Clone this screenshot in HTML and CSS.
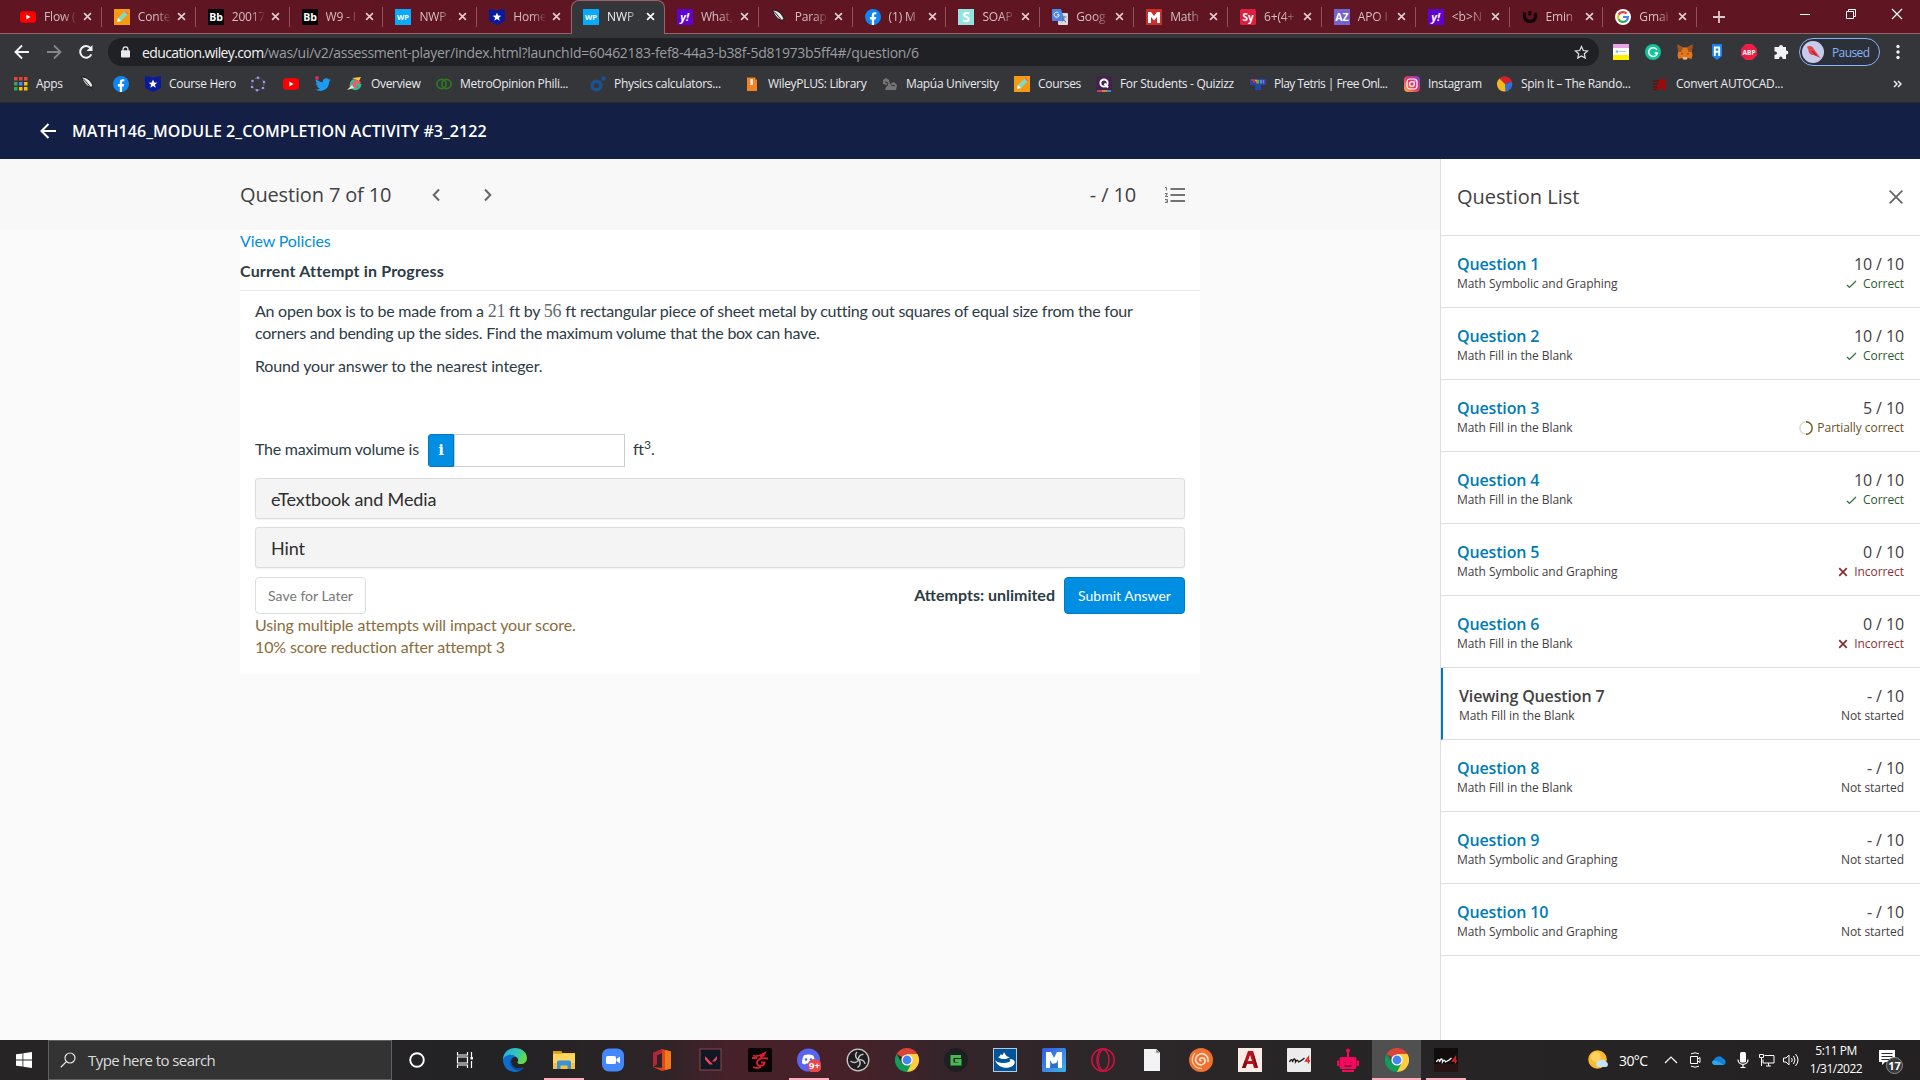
FILE: index.html
```html
<!DOCTYPE html>
<html lang="en">
<head>
<meta charset="utf-8">
<title>NWP Assessment Player</title>
<link rel="stylesheet" href="styles.css">
</head>
<body>
<svg class="defs" width="0" height="0">
  <defs>
    <symbol id="x" viewBox="0 0 10 10"><path d="M1.2 1.2l7.6 7.6M8.8 1.2L1.2 8.8" stroke="currentColor" stroke-width="1.8" fill="none"/></symbol>
    <symbol id="yt" viewBox="0 0 16 16"><rect y="2.3" width="16" height="11.4" rx="3" fill="#f00"/><path d="M6.3 5.5v5l4.3-2.5z" fill="#fff"/></symbol>
    <symbol id="pencil" viewBox="0 0 16 16"><rect width="16" height="16" fill="#f79a10"/><path d="M3 13l1-4 6.500-6.500 3 3L7 12z" fill="#7fd9c4"/><path d="M3 13l1-4 3 3z" fill="#fff"/><path d="M10.500 2.500l1-1 3 3-1 1z" fill="#ef6a7a"/></symbol>
    <symbol id="bb" viewBox="0 0 16 16"><rect width="16" height="16" fill="#050505"/><text x="8" y="12" class="ic-bold" font-size="10.500" fill="#fff">Bb</text></symbol>
    <symbol id="wp" viewBox="0 0 16 16"><rect width="16" height="16" fill="#0aaafa"/><text x="8" y="11" class="ic-bold" font-size="7.500" fill="#fff">WP</text></symbol>
    <symbol id="hero" viewBox="0 0 16 16"><path d="M0 0l8 1.500L16 0v12l-8 4-8-4z" fill="#0a1a9c"/><path d="M8 3.600l1.200 2.900 3.100.2-2.400 2 .8 3L8 10.100l-2.700 1.600.8-3-2.400-2 3.100-.2z" fill="#fff"/></symbol>
    <symbol id="yahoo" viewBox="0 0 16 16"><rect width="16" height="16" fill="#6001d2"/><text x="7.700" y="11.500" class="ic-bold" font-size="11" font-style="italic" fill="#fff">y!</text></symbol>
    <symbol id="feather" viewBox="0 0 16 16"><path d="M1.500 1c5 0 9 3 11.300 8.500L11 11.800C6 10 3 6 1.500 1z" fill="#e8e8e8" stroke="#111" stroke-width="1"/><path d="M3 2.500c3 3 6 7 10.500 12" stroke="#222" fill="none"/></symbol>
    <symbol id="fb" viewBox="0 0 16 16"><circle cx="8" cy="8" r="8" fill="#0f86f2"/><path d="M6.800 16v-5.600H4.900V8h1.900V6.300c0-2 1.100-3.100 2.900-3.100.9 0 1.600.1 1.600.1v1.900h-1c-1 0-1.200.6-1.200 1.200V8h2.100l-.4 2.400H9.100V16z" fill="#fff"/></symbol>
    <symbol id="soap" viewBox="0 0 16 16"><rect width="16" height="16" fill="#93e4e1"/><text x="8" y="13" class="ic-bold" font-size="14" fill="#fff">S</text></symbol>
    <symbol id="gt" viewBox="0 0 16 16"><rect x="6" y="4" width="10" height="12" rx="1" fill="#d8dbe0"/><path d="M0 1q0-1 1-1h8l4 12H1q-1 0-1-1z" fill="#4a86ea"/><path d="M7.200 5.800A2.500 2.500 0 1 1 6.500 4M5 5.800h2.200" stroke="#fff" fill="none"/><path d="M9.500 8h5M12 7v1c0 2-1 4-2.500 5M10.500 9c.5 2 2 3 3.500 4" stroke="#6b7788" fill="none" stroke-width=".9"/></symbol>
    <symbol id="mway" viewBox="0 0 16 16"><rect width="16" height="16" fill="#c9302c"/><path d="M2 14V3h3l3 4 3-4h3v11h-3V8l-3 3.500L5 8v6z" fill="#fff"/></symbol>
    <symbol id="sy" viewBox="0 0 16 16"><rect width="16" height="16" rx="1.500" fill="#dd1f40"/><text x="8" y="11.500" class="ic-bold" font-size="10" fill="#fff">Sy</text></symbol>
    <symbol id="az" viewBox="0 0 16 16"><rect width="16" height="16" fill="#7364d2"/><text x="8" y="12" class="ic-bold" font-size="10.500" fill="#fff">AZ</text></symbol>
    <symbol id="emin" viewBox="0 0 16 16"><path d="M3 3.500c-1.500 5 .5 9 5 9 4.500-.3 7-4 5-8.500" stroke="#120608" stroke-width="3.200" fill="none"/><path d="M7.800 2v4.500" stroke="#120608" stroke-width="3"/></symbol>
    <symbol id="google" viewBox="0 0 16 16"><circle cx="8" cy="8" r="8" fill="#fff"/><g fill="none" stroke-width="2.200"><path d="M11.600 4.600A5 5 0 0 0 3.600 5.800" stroke="#ea4335"/><path d="M3.600 5.700a5 5 0 0 0 0 4.600" stroke="#fbbc05"/><path d="M3.600 10.200a5 5 0 0 0 8 1.300" stroke="#34a853"/><path d="M8 8h4.900a5 5 0 0 1-1.400 3.600" stroke="#4285f4"/></g></symbol>
    <symbol id="chrome" viewBox="0 0 24 24"><path d="M12 12L1.600 6A12 12 0 0 1 22.400 6z" fill="#db4437"/><path d="M12 24A12 12 0 0 0 22.400 6H12v6z" fill="#ffcd40"/><path d="M1.600 6L7 15.200a6 6 0 0 0 9.500 0L12 24A12 12 0 0 1 1.600 6z" fill="#0f9d58"/><circle cx="12" cy="12" r="5.600" fill="#fff"/><circle cx="12" cy="12" r="4.400" fill="#4285f4"/></symbol>
    <symbol id="check" viewBox="0 0 12 10"><path d="M1 5.500l2.700 2.700L11 1" stroke="#3b7040" stroke-width="1.500" fill="none"/></symbol>
  </defs>
</svg>

<div class="screen">
  <div class="tabs">
    <div class="tab"><svg class="fav"><use href="#yt"/></svg><span>Flow (</span><svg class="tx"><use href="#x"/></svg></div>
    <div class="tab"><svg class="fav"><use href="#pencil"/></svg><span>Conte</span><svg class="tx"><use href="#x"/></svg></div>
    <div class="tab"><svg class="fav"><use href="#bb"/></svg><span>20017</span><svg class="tx"><use href="#x"/></svg></div>
    <div class="tab"><svg class="fav"><use href="#bb"/></svg><span>W9 - I</span><svg class="tx"><use href="#x"/></svg></div>
    <div class="tab"><svg class="fav"><use href="#wp"/></svg><span>NWP .</span><svg class="tx"><use href="#x"/></svg></div>
    <div class="tab nosep"><svg class="fav"><use href="#hero"/></svg><span>Home</span><svg class="tx"><use href="#x"/></svg></div>
    <div class="tab active"><svg class="fav"><use href="#wp"/></svg><span>NWP .</span><svg class="tx"><use href="#x"/></svg></div>
    <div class="tab"><svg class="fav"><use href="#yahoo"/></svg><span>What,</span><svg class="tx"><use href="#x"/></svg></div>
    <div class="tab"><svg class="fav"><use href="#feather"/></svg><span>Parap</span><svg class="tx"><use href="#x"/></svg></div>
    <div class="tab"><svg class="fav"><use href="#fb"/></svg><span>(1) M</span><svg class="tx"><use href="#x"/></svg></div>
    <div class="tab"><svg class="fav"><use href="#soap"/></svg><span>SOAP</span><svg class="tx"><use href="#x"/></svg></div>
    <div class="tab"><svg class="fav"><use href="#gt"/></svg><span>Goog</span><svg class="tx"><use href="#x"/></svg></div>
    <div class="tab"><svg class="fav"><use href="#mway"/></svg><span>Math</span><svg class="tx"><use href="#x"/></svg></div>
    <div class="tab"><svg class="fav"><use href="#sy"/></svg><span>6+(4+</span><svg class="tx"><use href="#x"/></svg></div>
    <div class="tab"><svg class="fav"><use href="#az"/></svg><span>APO I</span><svg class="tx"><use href="#x"/></svg></div>
    <div class="tab"><svg class="fav"><use href="#yahoo"/></svg><span class="tight">&lt;b&gt;N</span><svg class="tx"><use href="#x"/></svg></div>
    <div class="tab"><svg class="fav"><use href="#emin"/></svg><span>Emin</span><svg class="tx"><use href="#x"/></svg></div>
    <div class="tab"><svg class="fav"><use href="#google"/></svg><span>Gmai</span><svg class="tx"><use href="#x"/></svg></div>
    <svg class="newtab" viewBox="0 0 12 12"><path d="M6 0v12M0 6h12" stroke="#d8c8ca" stroke-width="1.800"/></svg>
    <div class="winctl">
      <svg viewBox="0 0 12 12"><path d="M1 6.500h10" stroke="#fff"/></svg>
      <svg viewBox="0 0 12 12"><path d="M1.500 3.500h7v7h-7zM3.500 3.500v-2h7v7h-2" stroke="#fff" fill="none"/></svg>
      <svg viewBox="0 0 12 12"><path d="M1 1l10 10M11 1L1 11" stroke="#fff" stroke-width="1.200"/></svg>
    </div>
  </div>

  <div class="toolbar">
    <svg class="nav" viewBox="0 0 16 16"><path d="M15 8H2M8 1.500L1.500 8 8 14.500" stroke="#f1f3f4" stroke-width="1.900" fill="none"/></svg>
    <svg class="nav" viewBox="0 0 16 16"><path d="M1 8h13M8 1.500L14.500 8 8 14.500" stroke="#85868a" stroke-width="1.800" fill="none"/></svg>
    <svg class="nav" viewBox="0 0 16 16"><path d="M13.300 10.300A5.800 5.800 0 1 1 12.500 4.200" stroke="#f1f3f4" stroke-width="2" fill="none"/><path d="M14.500 1v6h-6z" fill="#f1f3f4"/></svg>
    <div class="omni">
      <svg class="lock" viewBox="0 0 10 13"><rect y="4.500" width="10" height="8" rx="1" fill="#e8eaed"/><path d="M2.300 5V3.400a2.700 2.700 0 0 1 5.400 0V5" stroke="#e8eaed" stroke-width="1.400" fill="none"/></svg>
      <span class="host">education.wiley.com</span><span class="path">/was/ui/v2/assessment-player/index.html?launchId=60462183-fef8-44a3-b38f-5d81973b5ff4#/question/6</span>
      <svg class="star" viewBox="0 0 16 16"><path d="M8 1.700l1.900 4.200 4.500.5-3.400 3 1 4.500L8 11.600l-4 2.300 1-4.500-3.400-3 4.500-.5z" stroke="#e0e2e5" stroke-width="1.300" fill="none"/></svg>
    </div>
    <div class="exts">
      <svg viewBox="0 0 16 16"><rect width="16" height="16" fill="#fff"/><rect width="16" height="4" fill="#e9a4e4"/><rect y="11" width="16" height="5" fill="#faf000"/><circle cx="4" cy="7.500" r="1.300" fill="#86aef0"/><path d="M6 7.500h7" stroke="#b8c4d8"/></svg>
      <svg viewBox="0 0 16 16"><circle cx="8" cy="8" r="8" fill="#15c39a"/><path d="M12 6A4.400 4.400 0 1 0 12.400 9H9.500" stroke="#fff" stroke-width="1.500" fill="none"/></svg>
      <svg viewBox="0 0 16 16"><path d="M.5.500l5.500 3h4l5.500-3-.7 7 .7 4-1 3.500-3.500-1-1.500 2h-3l-1.500-2-3.500 1L.5 11.500l.7-4z" fill="#e2761b"/><path d="M.5.500l5.500 3L4.500 8 1 8zM15.500.500L10 3.500 11.500 8 15 8z" fill="#a4501c"/><path d="M6 13h4v2H6z" fill="#c9c0b8"/><path d="M4 9l2 1-1 .5zM12 9l-2 1 1 .5z" fill="#222"/></svg>
      <svg viewBox="0 0 16 16"><path d="M3 0h10v12L8 16l-5-4z" fill="#1683f0"/><path d="M5.800 12V3.500h4.400V12M5.800 7.800h4.400" stroke="#fff" stroke-width="1.900" fill="none"/></svg>
      <svg viewBox="0 0 16 16"><path d="M4.700 0h6.600L16 4.700v6.600L11.300 16H4.700L0 11.300V4.700z" fill="#ed1e45"/><text x="8" y="10.500" class="ic-bold" font-size="6.500" fill="#fff">ABP</text></svg>
      <svg viewBox="0 0 16 16"><path d="M6 3a2 2 0 0 1 4 0h3v3.500h.3a2 2 0 0 1 0 4H13V15H9.500v-.8a1.700 1.700 0 0 0-3.400 0v.8H1.500v-4.200h.8a1.700 1.700 0 0 0 0-3.400h-.8V3z" fill="#f1f3f4"/></svg>
    </div>
    <div class="pill"><svg viewBox="0 0 22 22"><circle cx="11" cy="11" r="11" fill="#c6cbea"/><path d="M5 6c3-2 6-.5 7.500 3l6 8-7-3c-3 0-5-2-5-5z" fill="#e8444a"/><path d="M10 10l4.500 4.500" stroke="#a02630" stroke-width="1.300"/></svg><span>Paused</span></div>
    <svg class="dots" viewBox="0 0 4 16"><circle cx="2" cy="2.500" r="1.700" fill="#f1f3f4"/><circle cx="2" cy="8" r="1.700" fill="#f1f3f4"/><circle cx="2" cy="13.500" r="1.700" fill="#f1f3f4"/></svg>
  </div>

  <div class="marks">
    <div><svg viewBox="0 0 16 16"><path d="M2 1h3.500v3.500H2z M7 1h3.500v3.500H7zM12 1h3.500v3.500H12z" fill="#ea4335"/><path d="M2 6h3.500v3.500H2zM2 11h3.500v3.500H2z" fill="#34a853"/><path d="M7 6h3.500v3.500H7z" fill="#4285f4"/><path d="M12 6h3.500v3.500H12zM7 11h3.500v3.500H7zM12 11h3.500v3.500H12z" fill="#fbbc05"/></svg><span>Apps</span></div>
    <div><svg><use href="#feather"/></svg></div>
    <div><svg><use href="#fb"/></svg></div>
    <div><svg><use href="#hero"/></svg><span>Course Hero</span></div>
    <div><svg viewBox="0 0 16 16"><circle cx="8" cy="8" r="6" fill="none" stroke="#6b6b78" stroke-dasharray="2 1.500"/><g fill="#9799f5"><circle cx="8" cy="1.700" r="1.300"/><circle cx="14" cy="6" r="1.300"/><circle cx="13" cy="12" r="1.300"/><circle cx="7" cy="14.300" r="1.300"/><circle cx="2" cy="11" r="1.300"/><circle cx="2.500" cy="5" r="1.300"/></g></svg></div>
    <div><svg><use href="#yt"/></svg></div>
    <div><svg viewBox="0 0 16 16"><path d="M15.800 3.800c-.6.300-1.200.4-1.800.5.700-.4 1.100-1 1.400-1.700-.6.400-1.300.6-2 .8a3.200 3.200 0 0 0-5.500 2.900C5.200 6.200 2.900 4.900 1.300 3a3.200 3.200 0 0 0 1 4.300c-.5 0-1-.2-1.500-.4 0 1.500 1.100 2.900 2.600 3.200-.5.100-1 .1-1.400 0 .4 1.300 1.600 2.200 3 2.200A6.500 6.500 0 0 1 .3 13.600C6 17 14.200 13.800 14.200 5.500c.6-.5 1.200-1 1.600-1.700z" fill="#1d9bf0"/><circle cx="2" cy="2" r="2" fill="#e0245e"/></svg></div>
    <div><svg viewBox="0 0 16 16"><path d="M5 2l9-1-2 4z" fill="#f7c948"/><path d="M2 10L8 3l6 3-5 7z" fill="#ef5b6c"/><path d="M8 4a4.500 4.500 0 1 0 5 5H9" stroke="#39b98b" stroke-width="2.500" fill="none"/><path d="M0 14l5-5 2 3z" fill="#e8e2d0"/></svg><span>Overview</span></div>
    <div><svg viewBox="0 0 16 16"><g fill="none" stroke="#2f7a1d" stroke-width="1.700"><circle cx="5.500" cy="8" r="4.600"/><circle cx="10.500" cy="8" r="4.600"/></g></svg><span>MetroOpinion Phili...</span></div>
    <div><svg viewBox="0 0 16 16"><circle cx="6.500" cy="9.500" r="4.300" fill="none" stroke="#1d5290" stroke-width="3.600"/><circle cx="13.500" cy="2.500" r="2.300" fill="#1d5290"/></svg><span>Physics calculators...</span></div>
    <div><svg viewBox="0 0 16 16"><path d="M3 1.500h8L13 4v11H3z" fill="#f58220"/><path d="M6.500 3h2.300v6H6.500z" fill="#fff"/><path d="M11 1.500L13 4h-2z" fill="#b8540a"/></svg><span>WileyPLUS: Library</span></div>
    <div><svg viewBox="0 0 16 16"><path d="M1 4l3-2 3 2 1 4 4-2 3 3-1 5H3L5 9 1 8z" fill="#757575"/><path d="M3 6l3 1-1 3M9 9l4 1" stroke="#303030" fill="none"/><path d="M2 6l1-1" stroke="#c34a36"/></svg><span>Mapúa University</span></div>
    <div><svg><use href="#pencil"/></svg><span>Courses</span></div>
    <div><svg viewBox="0 0 16 16"><rect width="16" height="16" rx="2" fill="#43204f"/><circle cx="8" cy="7" r="3.600" fill="none" stroke="#fff" stroke-width="2"/><path d="M8.500 7.500l3.500 4" stroke="#fff" stroke-width="2"/><path d="M1 15h5" stroke="#e84a8a" stroke-width="1.500"/><path d="M6 15h5" stroke="#f5b32a" stroke-width="1.500"/><path d="M11 15h4" stroke="#36b5ee" stroke-width="1.500"/></svg><span>For Students - Quizizz</span></div>
    <div><svg viewBox="0 0 16 16"><path d="M0 3h16v6h-5v5H5V9H0z" fill="#2347a8"/><path d="M1 4h3v3" stroke="#f03030" stroke-width="1.500" fill="none"/><path d="M5 4.500h2v3" stroke="#f5a020" stroke-width="1.300" fill="none"/><path d="M8.500 4v3.500" stroke="#3cc040" stroke-width="1.300"/><path d="M11 4v3.500" stroke="#40c0f0" stroke-width="1.300"/><path d="M13.500 4v3.500" stroke="#c050e0" stroke-width="1.500"/></svg><span class="tight">Play Tetris | Free Onl...</span></div>
    <div><svg viewBox="0 0 16 16"><defs><linearGradient id="ig" x1="0" y1="1" x2="1" y2="0"><stop offset="0" stop-color="#fdb640"/><stop offset=".5" stop-color="#e8336a"/><stop offset="1" stop-color="#7a3fd0"/></linearGradient></defs><rect width="16" height="16" rx="4" fill="url(#ig)"/><rect x="3" y="3" width="10" height="10" rx="3" fill="none" stroke="#fff" stroke-width="1.200"/><circle cx="8" cy="8" r="2.400" fill="none" stroke="#fff" stroke-width="1.200"/><circle cx="11" cy="5" r=".7" fill="#fff"/></svg><span>Instagram</span></div>
    <div><svg viewBox="0 0 16 16"><path d="M8 8L2.500 2.500A7.500 7.500 0 0 1 15 6z" fill="#d6202c"/><path d="M8 8l7-2a7.500 7.500 0 0 1-6.500 9.500z" fill="#2f6fe0"/><path d="M8 8l.5 7.500A7.500 7.500 0 0 1 2.500 2.500z" fill="#f5b91c"/></svg><span>Spin It – The Rando...</span></div>
    <div><svg viewBox="0 0 16 16"><path d="M1 5h6M1 8h5M1 11h4M1 13.500h4" stroke="#6e0c0c" stroke-width="1.500"/><path d="M4.500 14L8.500 3H13l1 11h-3v-2.500H8.300L7.500 14zM9 9h2V6z" fill="#b30000"/></svg><span>Convert AUTOCAD...</span></div>
    <svg class="more" viewBox="0 0 9 8"><path d="M1 1l3 3-3 3M5 1l3 3-3 3" stroke="#e8eaed" stroke-width="1.500" fill="none"/></svg>
  </div>

  <header class="course">
    <svg viewBox="0 0 16 16"><path d="M16 8H2M8.500 1L1.500 8l7 7" stroke="#fff" stroke-width="2" fill="none"/></svg>
    <h1>MATH146_MODULE 2_COMPLETION ACTIVITY #3_2122</h1>
  </header>

  <div class="page">
    <main>
      <div class="qbar">
        <span class="qtitle">Question 7 of 10</span>
        <svg class="chev" viewBox="0 0 8 14"><path d="M7 1.500L1.700 7 7 12.500" stroke="#666" stroke-width="2" fill="none"/></svg>
        <svg class="chev next" viewBox="0 0 8 14"><path d="M1 1.500L6.300 7 1 12.500" stroke="#666" stroke-width="2" fill="none"/></svg>
        <span class="score">- / 10</span>
        <svg class="list" viewBox="0 0 20 16"><path d="M5.500 2H20M5.500 8H20M5.500 14H20" stroke="#737373" stroke-width="2"/><path d="M0 .5h1.500v3M0 6.500h2.500L.3 9.500h2.700M0 12.500h2.500v3H0M.8 14h1.500" stroke="#737373" stroke-width="1" fill="none"/></svg>
      </div>
      <section class="card">
        <a class="policies">View Policies</a>
        <h2>Current Attempt in Progress</h2>
        <div class="body">
          <p class="p1">An open box is to be made from a <i>21</i> ft by <i>56</i> ft rectangular piece of sheet metal by cutting out squares of equal size from the four<br>corners and bending up the sides. Find the maximum volume that the box can have.</p>
          <p class="p2">Round your answer to the nearest integer.</p>
          <div class="answer"><span class="lead">The maximum volume is</span><b>i</b><input type="text"><span class="unit">ft<sup>3</sup>.</span></div>
          <div class="acc"><span>eTextbook and Media</span></div>
          <div class="acc"><span>Hint</span></div>
          <div class="actions"><button class="save">Save for Later</button><strong>Attempts: unlimited</strong><button class="submit">Submit Answer</button></div>
          <p class="warn">Using multiple attempts will impact your score.<br>10% score reduction after attempt 3</p>
        </div>
      </section>
    </main>
    <aside>
      <div class="ahead"><span>Question List</span><svg viewBox="0 0 14 14"><path d="M.7.700l12.600 12.600M13.300.700L.7 13.300" stroke="#666" stroke-width="1.800"/></svg></div>
      <div class="q"><div><a>Question 1</a><small>Math Symbolic and Graphing</small></div><div class="r"><em>10 / 10</em><small class="ok"><svg><use href="#check"/></svg>Correct</small></div></div>
      <div class="q"><div><a>Question 2</a><small>Math Fill in the Blank</small></div><div class="r"><em>10 / 10</em><small class="ok"><svg><use href="#check"/></svg>Correct</small></div></div>
      <div class="q"><div><a>Question 3</a><small>Math Fill in the Blank</small></div><div class="r"><em>5 / 10</em><small class="part"><svg viewBox="0 0 14 14"><circle cx="7" cy="7" r="6.200" fill="none" stroke="#ddd6c8" stroke-width="1.300"/><path d="M7 .8a6.200 6.200 0 0 1 0 12.400" fill="none" stroke="#7a5c1e" stroke-width="1.400"/></svg>Partially correct</small></div></div>
      <div class="q"><div><a>Question 4</a><small>Math Fill in the Blank</small></div><div class="r"><em>10 / 10</em><small class="ok"><svg><use href="#check"/></svg>Correct</small></div></div>
      <div class="q"><div><a>Question 5</a><small>Math Symbolic and Graphing</small></div><div class="r"><em>0 / 10</em><small class="bad"><svg><use href="#x"/></svg>Incorrect</small></div></div>
      <div class="q"><div><a>Question 6</a><small>Math Fill in the Blank</small></div><div class="r"><em>0 / 10</em><small class="bad"><svg><use href="#x"/></svg>Incorrect</small></div></div>
      <div class="q current"><div><a>Viewing Question 7</a><small>Math Fill in the Blank</small></div><div class="r"><em>- / 10</em><small>Not started</small></div></div>
      <div class="q"><div><a>Question 8</a><small>Math Fill in the Blank</small></div><div class="r"><em>- / 10</em><small>Not started</small></div></div>
      <div class="q"><div><a>Question 9</a><small>Math Symbolic and Graphing</small></div><div class="r"><em>- / 10</em><small>Not started</small></div></div>
      <div class="q"><div><a>Question 10</a><small>Math Symbolic and Graphing</small></div><div class="r"><em>- / 10</em><small>Not started</small></div></div>
    </aside>
  </div>

  <footer class="taskbar">
    <svg class="start" viewBox="0 0 16 16"><path d="M0 2.300L6.500 1.400v6.200H0zM7.300 1.300L16 0v7.600H7.300zM0 8.400h6.500v6.200L0 13.700zM7.300 8.400H16V16l-8.700-1.300z" fill="#fff"/></svg>
    <div class="search"><svg viewBox="0 0 16 16"><circle cx="10" cy="6" r="5" fill="none" stroke="#e6e6e6" stroke-width="1.200"/><path d="M6.400 9.600L.8 15.200" stroke="#e6e6e6" stroke-width="1.300"/></svg><span>Type here to search</span></div>
    <div class="apps">
      <div><svg viewBox="0 0 24 24"><circle cx="12" cy="12" r="6.800" fill="none" stroke="#fff" stroke-width="1.900"/></svg></div>
      <div><svg viewBox="0 0 24 24"><path d="M3.500 4v3h10V4M3.500 20v-3h10v3M3.500 9h10v6h-10zM17.500 4v5M17.500 13v7" stroke="#fff" stroke-width="1.200" fill="none"/><rect x="16.500" y="9" width="2.500" height="2.500" fill="#fff"/></svg></div>
      <div><svg viewBox="0 0 24 24"><defs><linearGradient id="e1" x1="0" y1="0" x2="1" y2=".4"><stop offset="0" stop-color="#2aa7e0"/><stop offset=".6" stop-color="#2fc6bd"/><stop offset="1" stop-color="#66d84a"/></linearGradient></defs><path d="M0 12C0 4 6 0 12 0c7 0 12 4.500 12 10 0 4-3 6-6 6-2.500 0-4-1-3.500-2 1-1.500 1-3-.5-4.500C10 6 2 7 0 12z" fill="url(#e1)"/><path d="M0 12C2 5.500 10 6 13 9c-4-.5-6 3-4.500 7 1.500 4 6 6 12 3.500C18 23 15.500 24 12 24 5 24 0 18.500 0 12z" fill="#0d6fcb"/><path d="M7 13c-1 5 4 10 10 9.500 2-.8 3-1.500 4-3-6 2-11 .5-12.500-3.500C8 14.500 8 13 8.500 12z" fill="#0b4a9e"/></svg></div>
      <div class="run"><svg viewBox="0 0 24 24"><path d="M1 3h8l1.500 2H23v16H1z" fill="#f7c23b"/><path d="M1 3h8l1.500 2.500H1z" fill="#dd9c13"/><path d="M1 6h22v9H1z" fill="#ffd560"/><path d="M5 21v-7q0-1.500 1.500-1.500h11q1.500 0 1.500 1.500v7h-3.500v-3.500h-7V21z" fill="#3b92d6"/></svg></div>
      <div><svg viewBox="0 0 24 24"><rect x="1" y=".5" width="22" height="23" rx="7" fill="#4288fc"/><rect x="5" y="8" width="10" height="8" rx="1.500" fill="#fff"/><path d="M15.500 11L19 8.500v7L15.500 13z" fill="#fff"/></svg></div>
      <div><svg viewBox="0 0 24 24"><path d="M3 5l9-4 9 2.500v17L12 23l-9-4 9 1V5L7 7v9l-4 3z" fill="#e04617"/><path d="M12 1v4L7 7v9l-4 3V5z" fill="#b5243a"/><path d="M15 2l6 1.500v17L15 22z" fill="#f4761d"/></svg></div>
      <div><svg viewBox="0 0 24 24"><rect x="1" y="1" width="21" height="21" fill="#101823" stroke="#8d4650"/><path d="M6 8v3.500l4.500 5H14zM18 8v3.500l-2 2h-3z" fill="#ee4455"/></svg></div>
      <div><svg viewBox="0 0 24 24"><rect width="24" height="24" rx="1.500" fill="#080505"/><path d="M5 7.500c4 1.500 8 0 12-2.500-1 3-3 4-5 4" stroke="#d8232e" stroke-width="1.700" fill="none"/><path d="M20 10.500c-6-1-11 .5-11 4.500 0 4 7 4 7.500-.5h-3.500M4 10h5M5 19c3 1.500 6 1 8 0" stroke="#d8232e" stroke-width="1.800" fill="none"/></svg></div>
      <div class="run"><svg viewBox="0 0 24 24"><circle cx="11.500" cy="12" r="11.500" fill="#5865f2"/><path d="M5 15c0-4 1-7 2.500-8 2-.8 6-.8 8 0C17 8 18 11 18 15c-2 2-3 1.500-4 .5H9c-1 1-2 1.500-4-.5z" fill="#fff"/><circle cx="9" cy="11.500" r="1.300" fill="#5865f2"/><circle cx="14" cy="11.500" r="1.300" fill="#5865f2"/><circle cx="17.500" cy="18" r="7" fill="#e5484d"/><text x="17.500" y="21.300" class="ic-bold" font-size="9.500" fill="#fff">9+</text></svg></div>
      <div><svg viewBox="0 0 24 24"><circle cx="12" cy="12" r="10.800" fill="#1e1c20" stroke="#c9c9c9" stroke-width="1.300"/><g fill="none" stroke="#bdbdbd" stroke-width="1.500"><path d="M11 4c-2.500 2.500-1.500 6.500 1.500 8 3-1 6 .5 6.500 4"/><path d="M12.500 12c-1.500 3-5.500 3.500-8 1M17.500 6.500c-3.500-.5-5.500 2.500-5 5.500M12.500 12c2.500 2 2 6-1 7.500"/></g></svg></div>
      <div><svg><use href="#chrome"/></svg></div>
      <div><svg viewBox="0 0 24 24"><circle cx="12" cy="12" r="12" fill="#1e1f21"/><path d="M17 8.500H8v7.500h8v-3.500h-5" stroke="#46b950" stroke-width="3" fill="none"/></svg></div>
      <div><svg viewBox="0 0 24 24"><rect x=".5" y=".5" width="23" height="23" fill="#00549c" stroke="#b8c8d8"/><path d="M2 12c2 3 9 4 14 2 2-1 1.500-2.500 0-3 6-.5 7.500 4 3.500 7-5 3.500-15 2-17.500-6z" fill="#fff"/><path d="M5 9c2 0 2-2 3-3 1 1.500 2 1.500 3-2 2 4 3 5 6 5-3 2.500-9 3-12 0z" fill="#fff"/></svg></div>
      <div><svg viewBox="0 0 24 24"><defs><linearGradient id="m1" x2="1" y2="1"><stop offset="0" stop-color="#3558e8"/><stop offset="1" stop-color="#3cb4e8"/></linearGradient></defs><rect width="24" height="24" rx="1.500" fill="url(#m1)"/><path d="M4 20V4h5l3 6 3-6h5v16h-4v-8l-3 5h-2l-3-5v8z" fill="#fff"/><path d="M9 16l6-1 1 5H8z" fill="#2d6fc8"/></svg></div>
      <div><svg viewBox="0 0 24 24"><g fill="none" stroke="#cc1440"><circle cx="12" cy="12" r="11.200" stroke-width="1.500"/><ellipse cx="12" cy="12" rx="6" ry="10.500" stroke-width="1.500"/><path d="M12 1.500c-6 5-6 16 0 21" stroke-width="1"/></g></svg></div>
      <div><svg viewBox="0 0 24 24"><path d="M4 1h12l4 4v18H4z" fill="#f2f3f5"/><path d="M16 1v4h4z" fill="#7b7e84" stroke="#d8d8d8" stroke-width=".6"/></svg></div>
      <div><svg viewBox="0 0 24 24"><circle cx="12" cy="12" r="12" fill="#f07030"/><path d="M12.500 12.500c-2 1-3-2 0-2.500 4-.5 5 5 1 6.500-5 1.500-9-4-5.500-8.500C13 3 20 7 19 14" stroke="#ffe0c8" stroke-width="1.700" fill="none"/><path d="M6 5C0 12 5 21 13 20.500" stroke="#ffc8a0" stroke-width="1.400" fill="none"/></svg></div>
      <div><svg viewBox="0 0 24 24"><rect width="24" height="24" fill="#fbece8"/><path d="M4 20L10 3h5l5 17h-4l-1.200-4H9l-1.500 4zM10 13h4l-2-6z" fill="#b5141c"/><path d="M4 20l3-8 2 3-1.500 5zM15 3l5 17-3-2z" fill="#7d0c14"/></svg></div>
      <div><svg viewBox="0 0 24 24"><rect width="24" height="24" rx="1" fill="#ececec"/><path d="M2.500 14c2-4 3-2 3 0 1-4 3-4 3 0 2-3 2-2 3 0 2-1 5-3 6-4" stroke="#171717" stroke-width="1.300" fill="none"/><path d="M21.500 15.500V9L18.500 13h4.500" stroke="#e02020" stroke-width="1.300" fill="none"/></svg></div>
      <div><svg viewBox="0 0 24 24"><g fill="#f5095f"><rect x="3.500" y="9" width="17" height="12" rx="2"/><rect x="1" y="12.500" width="2" height="5.500"/><rect x="21" y="12.500" width="2" height="5.500"/><path d="M11 3h2v6h-2zM6 22h12v2H6z"/><circle cx="12" cy="2.500" r="2"/></g><path d="M9 15v-1M15 15v-1M8.500 17.500q3.500 2 7 0" stroke="#5a0a2a" stroke-width="1.300" fill="none"/></svg></div>
      <div class="run on"><svg><use href="#chrome"/></svg></div>
      <div class="run"><svg viewBox="0 0 24 24"><rect width="24" height="24" fill="#120d0d"/><path d="M0 16h24v8H0z" fill="#281312"/><path d="M2.500 14c2-4 3-2 3 0 1-4 3-4 3 0 2-3 2-2 3 0 2-1 5-3 6-4" stroke="#f2f2f2" stroke-width="1.300" fill="none"/><path d="M21.500 15.500V9L18.500 13h4.500" stroke="#e02020" stroke-width="1.300" fill="none"/></svg></div>
    </div>
    <div class="tray">
      <svg class="wx" viewBox="0 0 20 20"><circle cx="9.500" cy="9.500" r="9.300" fill="#fbb92d"/><circle cx="8" cy="7" r="5" fill="#ffd35c"/><path d="M11 17a3 3 0 0 1 .2-6 4 4 0 0 1 6.800.8 2.700 2.700 0 0 1 0 5.200z" fill="#c5e3fa"/></svg>
      <span class="temp">30°C</span>
      <svg class="ti" viewBox="0 0 16 16"><path d="M2 11l6-6 6 6" stroke="#fff" stroke-width="1.200" fill="none"/></svg>
      <svg class="ti" viewBox="0 0 16 16"><path d="M3.500 4.500h7v7h-7zM10.500 7l2.500-1.500v5L10.500 9M4 1.800q4-2 8 0M4 14.200q4 2 8 0" stroke="#fff" fill="none"/></svg>
      <svg class="ti" viewBox="0 0 16 16"><path d="M3.500 13a3.500 3.500 0 0 1 0-6A5 5 0 0 1 12 6.500a3.500 3.500 0 0 1 .8 6.500z" fill="#1482d8"/><path d="M1 9.500c2-2 5-1 7 .5l5 3H3.500A3.300 3.300 0 0 1 1 9.500z" fill="#28a8ea"/></svg>
      <svg class="ti" viewBox="0 0 16 16"><rect x="5" y="0" width="6" height="10.500" rx="1.500" fill="#fff"/><path d="M3 7.500c0 6.500 10 6.500 10 0M8 12.500V15M5.500 15.500h5" stroke="#fff" fill="none" stroke-width="1.200"/></svg>
      <svg class="ti" viewBox="0 0 16 16"><path d="M5.500 3.500H15v7.500H4V7.500M7 14h5M9.500 11v3M.5 2.500h4v3h-4zM2.500 5.500V14" stroke="#fff" fill="none"/></svg>
      <svg class="ti" viewBox="0 0 16 16"><path d="M.5 6h2.500l3-3v10L3 10H.5zM8.500 6q1.500 2 0 4M10.500 4q3 4 0 8M12.500 2q5 6 0 12" stroke="#fff" fill="none"/></svg>
      <div class="clock"><span>5:11 PM</span><span>1/31/2022</span></div>
      <svg class="note" viewBox="0 0 26 26"><path d="M1 2h16v12H7l-3 3v-3H1z" fill="#fff"/><path d="M3.500 5.500h11M3.500 8.500h11M3.500 11.500h8" stroke="#2a2829" stroke-width="1.100"/><circle cx="16.500" cy="17.500" r="8" fill="#39393b" stroke="#8c8c8c"/><text x="16.500" y="21.500" class="ic-bold" font-size="11" fill="#fff">17</text></svg>
    </div>
  </footer>
</div>
</body>
</html>
```
FILE: styles.css
```css
* { box-sizing: border-box; }
body { margin: 0; background: #fafafa; overflow: hidden; }
.defs { position: absolute; }
.ic-bold { font-family: "Open Sans", sans-serif; font-weight: 700; text-anchor: middle; }
.screen { display: flex; flex-direction: column; width: 1920px; height: 1080px; font-family: "Open Sans", sans-serif; }

/* browser tab strip */
.tabs { display: flex; height: 34px; padding-left: 8px; background: #601522; border-bottom: 1px solid #98636b; flex: none; }
.tab { position: relative; display: flex; align-items: center; width: 93.85px; flex: none; padding-left: 12px; color: #d5bec1; font-size: 12px; }
.tab::after { content: ""; position: absolute; right: 0; top: 7px; width: 1px; height: 20px; background: #93535d; }
.tab.nosep::after { display: none; }
.tab .fav { width: 16px; height: 16px; flex: none; }
.tab span { margin: 0 -6px 0 8px; width: 38px; flex: none; white-space: nowrap; letter-spacing: -.15px; -webkit-mask-image: linear-gradient(90deg, #000 50%, transparent 88%); mask-image: linear-gradient(90deg, #000 50%, transparent 88%); }
.tab .tight { letter-spacing: .1px; }
.tab .tx { width: 9px; height: 9px; margin-left: 7px; color: #dfcdd0; flex: none; }
.tab.active { height: 34px; background: #35363a; color: #f1f3f4; border: 1px solid #98636b; border-bottom: 0; border-radius: 8px 8px 0 0; padding: 0 0 2px 11px; }
.tab.active::after { display: none; }
.tab.active .tx { color: #fff; }
.newtab { width: 12px; height: 12px; margin: 11px 0 0 16px; }
.winctl { display: flex; margin-left: auto; padding: 8px 17px 0 0; gap: 34px; }
.winctl svg { width: 12px; height: 12px; }

/* address bar */
.toolbar { display: flex; align-items: center; height: 36px; padding-left: 14px; background: #35363a; flex: none; }
.nav { width: 16px; height: 16px; margin-right: 16px; flex: none; }
.omni { display: flex; align-items: center; width: 1491px; height: 28px; margin-left: -2px; padding: 0 10px 0 13px; border-radius: 14px; background: #202124; font-size: 14px; white-space: nowrap; }
.lock { width: 9px; height: 12px; margin-right: 12px; }
.host { color: #f1f3f4; letter-spacing: -.62px; }
.path { color: #9a9da1; letter-spacing: -.29px; }
.star { width: 15px; height: 15px; margin-left: auto; }
.exts { display: flex; gap: 16px; margin-left: 14px; }
.exts svg { width: 16px; height: 16px; }
.pill { display: flex; align-items: center; width: 81px; height: 28px; margin-left: 10px; padding-left: 2px; border: 1px solid #8ab4f8; border-radius: 14px; color: #8ab4f8; font-size: 12px; letter-spacing: -.6px; background: #2c3039; }
.pill svg { width: 22px; height: 22px; margin-right: 8px; }
.dots { width: 4px; height: 16px; margin-left: 16px; }

/* bookmarks */
.marks { position: relative; display: grid; grid-template-columns: 68px 33px 32px 105px 33px 32px 32px 89px 154px 154px 138px 132px 82px 154px 154px 93px 155px 150px; height: 33px; padding-left: 12px; background: #35363a; border-bottom: 1px solid #2a2b2e; color: #e8eaed; font-size: 12px; letter-spacing: -.32px; align-items: center; flex: none; }
.marks div { display: flex; align-items: center; gap: 8px; white-space: nowrap; margin-top: -5px; }
.marks .tight { letter-spacing: -.55px; }
.marks svg { width: 16px; height: 16px; flex: none; }
.marks .more { position: absolute; right: 18px; top: 10px; width: 9px; height: 8px; }

.course { display: flex; align-items: center; height: 56px; padding-left: 40px; gap: 16px; background: #141f45; color: #fff; flex: none; }
.course svg { width: 16px; height: 16px; }
h1 { margin: 0; font-size: 16px; font-weight: 600; letter-spacing: .05px; }

/* question */
.page { display: flex; flex: 1; min-height: 0; }
main { flex: 1; }
.qbar { display: flex; align-items: center; height: 71px; padding: 0 255px 0 240px; background: #f8f8f8; color: #424242; font-size: 20px; letter-spacing: -.15px; }
.qtitle { width: 192px; }
.chev { width: 8px; height: 14px; }
.next { margin-left: 44px; }
.score { margin-left: auto; }
.list { width: 20px; height: 16px; margin-left: 29px; }
.card { width: 960px; height: 444px; margin-left: 240px; background: #fff; font-family: Lato, sans-serif; font-size: 16px; color: #2d3b45; }
.policies { display: block; line-height: 22px; color: #008ee2; letter-spacing: -.12px; }
h2 { margin: 0; padding: 8px 0; line-height: 22px; font-size: 16px; font-weight: 700; letter-spacing: .16px; border-bottom: 1px solid #e8eaec; }
.body { padding: 9px 15px 0; }
.body p { margin: 0; line-height: 22px; white-space: nowrap; }
.body .p1 { letter-spacing: -.235px; }
.body .p2 { margin-top: 11px; letter-spacing: -.15px; }
.body i { font: 18px/20px "Liberation Serif", serif; color: #616a70; }
.answer { display: flex; align-items: center; height: 33px; margin-top: 57px; }
.answer .lead { width: 173px; padding-bottom: 4px; letter-spacing: -.24px; }
.answer b { width: 26px; height: 33px; background: #008ee2; border: 1px solid #0079c1; border-radius: 3px 0 0 3px; color: #fff; text-align: center; font: 700 15px/31px "DejaVu Serif", serif; }
.answer input { width: 171px; height: 33px; border: 1px solid #c7cdd1; padding: 0; margin-right: 8px; }
.unit { padding-bottom: 4px; }
.unit sup { font-size: 12px; line-height: 0; vertical-align: 6px; }
.acc { display: flex; align-items: center; height: 41px; margin-top: 8px; padding-left: 15px; background: #f4f4f4; border: 1px solid #dcdcdc; border-radius: 3px; box-shadow: 0 1px 1px #0000000d; color: #2d2d2d; font-size: 18px; letter-spacing: -.14px; }
.answer + .acc { margin-top: 11px; }
.actions { display: flex; align-items: center; height: 37px; margin-top: 9px; }
button { height: 37px; padding: 0; border-radius: 4px; font: 14px Lato, sans-serif; }
.save { width: 111px; background: #fff; border: 1px solid #ddd; color: #777; }
.actions strong { margin: 0 9px 2px auto; }
.submit { width: 121px; background: #008ee2; border: 1px solid #0079c1; color: #fff; }
.body .warn { color: #8a6d3b; letter-spacing: -.12px; }

/* question list */
aside { width: 480px; background: #fff; border-left: 1px solid #dcdcdc; color: #424242; }
.ahead { display: flex; align-items: center; justify-content: space-between; height: 77px; padding: 0 17px 0 16px; border-bottom: 1px solid #dcdcdc; font-size: 20px; }
.ahead span { padding-bottom: 2px; }
.ahead svg { width: 14px; height: 14px; }
.q { display: flex; justify-content: space-between; height: 72px; padding: 16px 16px 0; border-bottom: 1px solid #dcdcdc; }
.q a { display: block; font-size: 16px; line-height: 24px; font-weight: 600; letter-spacing: -.15px; color: #007cb5; }
.q small { display: block; font-size: 12px; line-height: 16px; letter-spacing: -.05px; }
.q em { display: block; font-style: normal; font-size: 16px; line-height: 24px; letter-spacing: -.1px; }
.q .r { text-align: right; }
.q.current { border-left: 2px solid #007cb5; }
.q.current a { color: #424242; }
.q .ok { color: #2a5a30; }
.q .ok svg { width: 11px; height: 9px; margin-right: 6px; vertical-align: -1px; }
.q .part { color: #69501c; }
.q .part svg { width: 14px; height: 14px; margin-right: 4px; vertical-align: -3px; }
.q .bad { color: #8a3136; }
.q .bad svg { width: 10px; height: 10px; margin-right: 6px; vertical-align: -1px; }

/* desktop taskbar */
.taskbar { display: flex; height: 40px; flex: none; color: #fff; background: linear-gradient(90deg, #272425 0, #232224 520px, #2e2427 660px, #47212a 730px, #47212a 860px, #35252a 940px, #2d2729 1100px, #282526 1300px, #232122 1920px); }
.start { width: 16px; height: 16px; margin: 12px 16px; }
.search { display: flex; align-items: center; width: 344px; height: 40px; padding-left: 11px; background: #333; border: 1px solid #616161; font-size: 15px; letter-spacing: -.57px; color: #dcdcdc; }
.search svg { width: 16px; height: 16px; margin-right: 12px; }
.apps { display: flex; }
.apps div { display: flex; align-items: center; justify-content: center; width: 49px; height: 40px; }
.apps svg { width: 24px; height: 24px; }
.apps .run { background: linear-gradient(#ffaec0, #ffaec0) center bottom / 40px 2px no-repeat; }
.apps .on { background: linear-gradient(#ffaec0, #ffaec0) left bottom / 100% 2px no-repeat #505050; }
.tray { display: flex; align-items: center; width: 332px; margin-left: auto; }
.wx { width: 20px; height: 20px; margin-right: 11px; }
.temp { width: 44px; font-size: 14px; letter-spacing: -.6px; }
.ti { width: 16px; height: 16px; margin-right: 8px; }
.clock { width: 56px; margin-left: 1px; display: flex; flex-direction: column; align-items: center; font-size: 12px; line-height: 18px; letter-spacing: -.5px; white-space: nowrap; }
.note { width: 26px; height: 26px; margin: 2px 0 0 14px; }
```
